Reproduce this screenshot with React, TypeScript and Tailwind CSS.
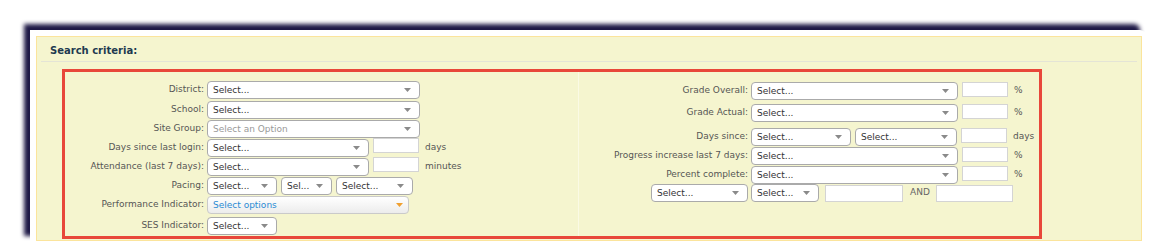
import type { ReactNode } from 'react';

function Arrow({ color = '#8a8a8a' }: { color?: string }) {
  return (
    <svg width="7" height="4" viewBox="0 0 7 4" className="shrink-0">
      <path d="M0 0 L7 0 L3.5 4 Z" fill={color} />
    </svg>
  );
}

function Select({ className, text = 'Select...', muted = false }: { className: string; text?: string; muted?: boolean }) {
  return (
    <div
      className={`h-[18px] shrink-0 flex items-center justify-between pl-[5px] pr-[8px] bg-white border border-[#aaa] rounded-[4px] ${className}`}
    >
      <span className={`truncate leading-none ${muted ? 'text-[#999]' : 'text-[#333]'}`}>{text}</span>
      <Arrow />
    </div>
  );
}

function Input({ className }: { className: string }) {
  return <div className={`shrink-0 bg-white border border-[#d4d4d4] ${className}`} />;
}

function Unit({ children }: { children: ReactNode }) {
  return <span className="ml-[2px] text-[#555]">{children}</span>;
}

function LeftRow({ label, className = '', children }: { label: string; className?: string; children: ReactNode }) {
  return (
    <div className={`flex items-center h-[18px] ${className}`}>
      <div className="w-[142px] shrink-0 text-right text-[#555] pr-[3px] whitespace-nowrap">{label}</div>
      <div className="flex items-center gap-[4px]">{children}</div>
    </div>
  );
}

function RightRow({ label, className = '', children }: { label: ReactNode; className?: string; children: ReactNode }) {
  return (
    <div className={`flex items-center h-[18px] ${className}`}>
      <div className="w-[172px] shrink-0 flex justify-end text-[#555] pr-[3px] whitespace-nowrap">{label}</div>
      <div className="flex items-center gap-[4px]">{children}</div>
    </div>
  );
}

export default function App() {
  return (
    <div className="w-[1150px] h-[245px] overflow-hidden bg-white font-['DejaVu_Sans',sans-serif] text-[9px]">
      <div className="ml-[30px] mt-[30px] w-[1116px] h-[212px] bg-white pt-[6px] pl-[6px] rounded-tr-[6px] shadow-[-6px_-6px_4px_#1d1846]">
        <div className="w-[1106px] h-[205px] bg-[#f5f5cf] border border-[#fbe49c] px-[4px]">
          <div className="h-[25px] flex items-center pl-[9px] pt-[2px] border-b border-[#e4e4d6]">
            <span className="text-[10px] font-bold text-[#1e3a4f]">Search criteria:</span>
          </div>

          <div className="ml-[21px] mt-[7px] w-[980px] h-[170px] border-[3px] border-[#e8473a] flex">
            {/* left column */}
            <div className="w-[513px] pt-[9px] flex flex-col">
              <LeftRow label="District:">
                <Select className="w-[213px]" />
              </LeftRow>
              <LeftRow label="School:" className="mt-[2px]">
                <Select className="w-[213px]" />
              </LeftRow>
              <LeftRow label="Site Group:" className="mt-[1px]">
                <Select className="w-[213px]" text="Select an Option" muted />
              </LeftRow>
              <LeftRow label="Days since last login:" className="mt-[1px]">
                <Select className="w-[162px]" />
                <Input className="w-[46px] h-[15px] self-start -mt-[1px]" />
                <Unit>days</Unit>
              </LeftRow>
              <LeftRow label="Attendance (last 7 days):" className="mt-[1px]">
                <Select className="w-[162px]" />
                <Input className="w-[46px] h-[15px] self-start -mt-[1px]" />
                <Unit>minutes</Unit>
              </LeftRow>
              <LeftRow label="Pacing:" className="mt-[1px]">
                <Select className="w-[70px]" />
                <Select className="w-[51px]" text="Sel..." />
                <Select className="w-[77px]" />
              </LeftRow>
              <LeftRow label="Performance Indicator:" className="mt-[1px]">
                <div className="w-[202px] h-[18px] flex items-center justify-between pl-[5px] pr-[5px] rounded-[4px] border border-[#cacaca] bg-gradient-to-b from-white to-[#ececec]">
                  <span className="text-[#2a8bd4] leading-none">Select options</span>
                  <Arrow color="#f0a030" />
                </div>
              </LeftRow>
              <LeftRow label="SES Indicator:" className="mt-[3px]">
                <Select className="w-[70px]" />
              </LeftRow>
            </div>

            {/* right column */}
            <div className="flex-1 border-l border-[#fafae4] pt-[10px] flex flex-col">
              <RightRow label="Grade Overall:">
                <Select className="w-[207px]" />
                <Input className="w-[46px] h-[15px] self-start" />
                <Unit>%</Unit>
              </RightRow>
              <RightRow label="Grade Actual:" className="mt-[4px]">
                <Select className="w-[207px]" />
                <Input className="w-[46px] h-[15px] self-start" />
                <Unit>%</Unit>
              </RightRow>
              <RightRow label="Days since:" className="mt-[6px]">
                <Select className="w-[100px]" />
                <Select className="w-[102px]" />
                <Input className="w-[46px] h-[15px] self-start" />
                <Unit>days</Unit>
              </RightRow>
              <RightRow label="Progress increase last 7 days:" className="mt-[1px]">
                <Select className="w-[207px]" />
                <Input className="w-[46px] h-[15px] self-start" />
                <Unit>%</Unit>
              </RightRow>
              <RightRow label="Percent complete:" className="mt-[1px]">
                <Select className="w-[207px]" />
                <Input className="w-[46px] h-[15px] self-start" />
                <Unit>%</Unit>
              </RightRow>
              <RightRow label={<Select className="w-[97px]" />} className="mt-[0px]">
                <Select className="w-[68px]" />
                <Input className="w-[78px] h-[17px] ml-[2px]" />
                <span className="ml-[3px] mr-[2px] text-[#666]">AND</span>
                <Input className="w-[77px] h-[17px]" />
              </RightRow>
            </div>
          </div>
        </div>
      </div>
    </div>
  );
}
